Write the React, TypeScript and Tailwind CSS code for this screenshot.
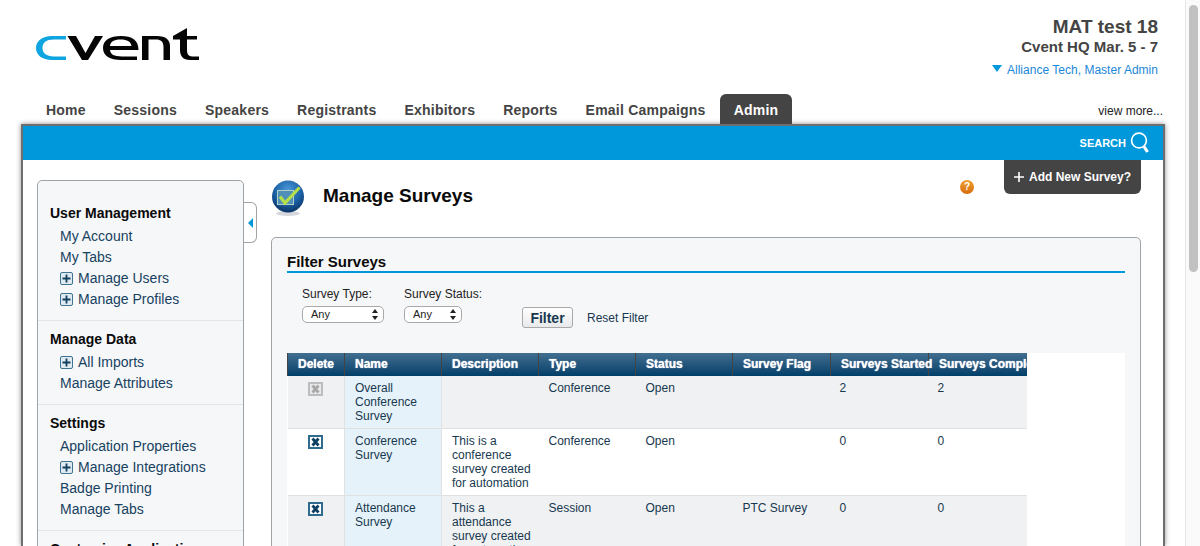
import { Fragment } from "react";

const tabs = ["Home", "Sessions", "Speakers", "Registrants", "Exhibitors", "Reports", "Email Campaigns"];

type NavItem = { label: string; plus?: boolean };

const sections: { title: string; items: NavItem[] }[] = [
  {
    title: "User Management",
    items: [
      { label: "My Account" },
      { label: "My Tabs" },
      { label: "Manage Users", plus: true },
      { label: "Manage Profiles", plus: true },
    ],
  },
  {
    title: "Manage Data",
    items: [{ label: "All Imports", plus: true }, { label: "Manage Attributes" }],
  },
  {
    title: "Settings",
    items: [
      { label: "Application Properties" },
      { label: "Manage Integrations", plus: true },
      { label: "Badge Printing" },
      { label: "Manage Tabs" },
    ],
  },
  { title: "Customize Application", items: [] },
];

const columns = [
  { label: "Delete", width: "w-[57px]", center: true },
  { label: "Name", width: "w-[97px]" },
  { label: "Description", width: "w-[97px]" },
  { label: "Type", width: "w-[97px]" },
  { label: "Status", width: "w-[97px]" },
  { label: "Survey Flag", width: "w-[98px]" },
  { label: "Surveys Started", width: "w-[98px]" },
  { label: "Surveys Completed", width: "w-[99px]" },
];

const rows = [
  {
    active: false,
    name: "Overall Conference Survey",
    description: "",
    type: "Conference",
    status: "Open",
    flag: "",
    started: "2",
    completed: "2",
    height: "h-[52px]",
  },
  {
    active: true,
    name: "Conference Survey",
    description: "This is a conference survey created for automation",
    type: "Conference",
    status: "Open",
    flag: "",
    started: "0",
    completed: "0",
    height: "h-[67px]",
  },
  {
    active: true,
    name: "Attendance Survey",
    description: "This a attendance survey created for automation",
    type: "Session",
    status: "Open",
    flag: "PTC Survey",
    started: "0",
    completed: "0",
    height: "h-[67px]",
  },
];

function Logo() {
  return (
    <svg width="165" height="34" viewBox="35 28 165 34" aria-label="cvent">
      <path
        d="M66 36H52C42 36 36 41 36 48S42 60 52 60H66V56.4H54C46 56.4 42.5 53 42.5 48S46 39.6 54 39.6H66Z"
        fill="#0ea5e0"
      />
      <path d="M67.5 36H76L85.5 53 95 36H103L88 60H82Z" fill="#050505" />
      <path
        fillRule="evenodd"
        d="M121 36C132 36 138.5 40 138.5 50H110C110.5 54.5 114 56.4 122 56.4H137V60H121C110 60 103 56 103 48S110 36 121 36ZM110 46H131.5C131 42 127.5 39.6 120.5 39.6S110.5 42 110 46Z"
        fill="#050505"
      />
      <path d="M142 60V36H157C166 36 170 40 170 46V60H163.5V47C163.5 42 161 39.6 156 39.6H148.5V60Z" fill="#050505" />
      <path
        d="M173 36L187 28V36H197V39.6H187V50C187 54.5 189 56.4 192 56.4H199V60H190C183 60 180 56 180 50V39.6H173Z"
        fill="#050505"
      />
    </svg>
  );
}

function PlusBox() {
  return (
    <svg width="13" height="13" viewBox="0 0 13 13" className="mr-[5px] shrink-0">
      <rect x="0.5" y="0.5" width="12" height="12" rx="1.5" fill="#dfeaf1" stroke="#3f7390" />
      <path d="M6.5 2.5V10.5M2.5 6.5H10.5" stroke="#12405e" strokeWidth="1.8" />
    </svg>
  );
}

function DeleteIcon({ active }: { active: boolean }) {
  const border = active ? "#2f6b8f" : "#bdbdbd";
  const mark = active ? "#0c3f62" : "#a8a8a8";
  return (
    <svg width="15" height="14" viewBox="0 0 15 14" className="mx-auto block">
      <rect x="1" y="1" width="13" height="12" fill={active ? "#ffffff" : "#e9e9e9"} stroke={border} strokeWidth="2" />
      <path d="M4.5 3.5L10.5 10.5M10.5 3.5L4.5 10.5" stroke={mark} strokeWidth="2.8" />
    </svg>
  );
}

function SurveyIcon() {
  return (
    <svg width="34" height="37" viewBox="0 0 34 37" className="shrink-0">
      <defs>
        <radialGradient id="ball" cx="0.5" cy="0.3" r="0.75">
          <stop offset="0" stopColor="#4c9ad8" />
          <stop offset="0.55" stopColor="#1c62a8" />
          <stop offset="1" stopColor="#082c58" />
        </radialGradient>
      </defs>
      <ellipse cx="17" cy="33.5" rx="12" ry="2.5" fill="#d5d8dc" />
      <circle cx="17" cy="16.5" r="16" fill="url(#ball)" />
      <rect x="6.5" y="10.5" width="16" height="14" fill="#4f8fb8" stroke="#b4d0c4" strokeWidth="1" />
      <path d="M9 16.5L14 23L28.5 7.5" fill="none" stroke="#b4e04a" strokeWidth="3.2" />
    </svg>
  );
}

function HelpIcon() {
  return (
    <div className="flex h-[14px] w-[14px] items-center justify-center rounded-full bg-gradient-to-b from-[#f0a030] to-[#d96c08] text-[10px] font-bold leading-none text-white">
      ?
    </div>
  );
}

function SearchIcon() {
  return (
    <svg width="20" height="22" viewBox="0 0 20 22" fill="none">
      <circle cx="9" cy="8.5" r="7.4" stroke="#ffffff" strokeWidth="1.7" />
      <path d="M14 14.5L17.5 20" stroke="#ffffff" strokeWidth="3.2" />
    </svg>
  );
}

function Select({ width, label }: { width: string; label: string }) {
  return (
    <div className={`relative ${width}`}>
      <select
        defaultValue={label}
        className="h-[17px] w-full appearance-none rounded-[5px] border border-[#a9a9a9] bg-white pl-2 text-[11px] leading-none text-[#222]"
      >
        <option>{label}</option>
      </select>
      <svg width="6" height="11" viewBox="0 0 6 11" className="pointer-events-none absolute right-[6px] top-[3px]">
        <path d="M3 0L6 4H0ZM3 11L0 7H6Z" fill="#222" />
      </svg>
    </div>
  );
}

function Sidebar() {
  return (
    <aside className="relative mt-5 h-[400px] w-[207px] shrink-0 rounded-t-[5px] border border-[#a0a3a6] bg-[#f6f7f9]">
      {sections.map((section, i) => (
        <Fragment key={section.title}>
          <div className={`px-3 border-[#e2e4e6] ${i === 0 ? "pt-[23px] pb-[10px]" : "border-t pt-[9px] pb-[10px]"}`}>
            <h3 className="mb-[4px] text-[14px] font-bold leading-[18px] text-[#0a0a0a]">{section.title}</h3>
            {section.items.map((item) => (
              <div key={item.label} className="flex h-[21px] items-center pl-[10px] text-[14px] text-[#17425f]">
                {item.plus && <PlusBox />}
                {item.label}
              </div>
            ))}
          </div>
        </Fragment>
      ))}
      {/* collapse handle */}
      <div className="absolute left-[206px] top-[21px] flex h-[41px] w-[13px] items-center justify-center rounded-r-[6px] border border-l-0 border-[#a0a3a6] bg-white">
        <svg width="5" height="10" viewBox="0 0 5 10">
          <path d="M5 0V10L0 5Z" fill="#0098da" />
        </svg>
      </div>
    </aside>
  );
}

function SurveysTable() {
  return (
    <div className="mt-[25px] bg-white">
      <div className="w-[740px] overflow-hidden">
        <table className="w-[740px] table-fixed border-collapse text-[12px] leading-[14px] text-[#17384f]">
          <thead>
            <tr className="h-[23px] bg-gradient-to-b from-[#416f90] to-[#003f69]">
              {columns.map((col) => (
                <th
                  key={col.label}
                  className={`${col.width} whitespace-nowrap border-x border-[#444] p-0 pb-[2px] text-[12px] font-bold text-white [text-shadow:0_0_1px_#fff] ${col.center ? "text-center" : "pl-[10px] text-left"}`}
                >
                  {col.label}
                </th>
              ))}
            </tr>
          </thead>
          <tbody>
            {rows.map((row, i) => (
              <tr key={row.name} className={`${row.height} border-b border-[#e0e1e3] ${i % 2 === 0 ? "bg-[#f0f1f3]" : "bg-white"}`}>
                <td className="border-r border-[#e0e1e3] pt-[6px] align-top">
                  <DeleteIcon active={row.active} />
                </td>
                <td className="border-r border-[#e0e1e3] bg-[#e6f2f9] pl-[10px] pr-2 pt-[5px] align-top">{row.name}</td>
                <td className="pl-[10px] pr-1 pt-[5px] align-top">{row.description}</td>
                <td className="pl-[10px] pt-[5px] align-top">{row.type}</td>
                <td className="pl-[10px] pt-[5px] align-top">{row.status}</td>
                <td className="pl-[10px] pt-[5px] align-top">{row.flag}</td>
                <td className="pl-[9px] pt-[5px] align-top">{row.started}</td>
                <td className="pl-[9px] pt-[5px] align-top">{row.completed}</td>
              </tr>
            ))}
          </tbody>
        </table>
      </div>
    </div>
  );
}

export default function App() {
  return (
    <div className="flex h-[546px] overflow-hidden bg-white font-['Liberation_Sans',Arial,sans-serif]">
      <div className="h-[546px] w-[1185px] shrink-0 overflow-hidden">
        <header className="flex h-[94px] items-start justify-between pr-[27px]">
          <div className="pl-[35px] pt-[28px]">
            <Logo />
          </div>
          <div className="pt-[16px] text-right text-[#444]">
            <div className="text-[19px] font-bold leading-[21px]">MAT test 18</div>
            <div className="text-[15px] font-bold leading-[20px]">Cvent HQ Mar. 5 - 7</div>
            <div className="mt-[5px] flex items-center justify-end text-[12px] leading-[16px] tracking-[0.02px] text-[#1b87d8]">
              <svg width="10" height="7" viewBox="0 0 10 7" className="mb-[3px] mr-[5px]">
                <path d="M0 0H10L5 7Z" fill="#0098da" />
              </svg>
              Alliance Tech, Master Admin
            </div>
          </div>
        </header>

        <nav className="flex h-[30px] items-end pl-[32px] pr-[22px]">
          {tabs.map((tab) => (
            <div key={tab} className="flex h-[30px] items-center px-[14px] pt-[2px] text-[14px] font-bold tracking-[0.22px] text-[#444]">
              {tab}
            </div>
          ))}
          <div className="flex h-[30px] items-center rounded-t-[6px] bg-[#444] px-[14px] pt-[2px] text-[14px] font-bold tracking-[0.22px] text-white">
            Admin
          </div>
          <div className="ml-auto pb-[6px] text-[12px] leading-[14px] text-[#222]">view more...</div>
        </nav>

        <main className="ml-[21px] h-[422px] w-[1144px] border-x-2 border-t-2 border-[#6e6e6e] bg-white shadow-[0_0_5px_rgba(0,0,0,0.45)]">
          <div className="flex h-[34px] items-center justify-end bg-[#0098da] pr-[13px] text-[11px] font-bold text-white">
            <span className="mr-[4px] mt-[1px]">SEARCH</span>
            <SearchIcon />
          </div>

          <div className="flex pl-[14px]">
            <Sidebar />

            <section className="ml-[27px] w-[870px]">
              <div className="flex h-[77px] items-start">
                <div className="mt-[20px]">
                  <SurveyIcon />
                </div>
                <h1 className="ml-[18px] mt-[25px] text-[19px] font-bold leading-[22px] text-[#0a0a0a]">Manage Surveys</h1>
                <div className="ml-auto mr-[30px] mt-[20px]">
                  <HelpIcon />
                </div>
                <button className="flex h-[34px] w-[137px] items-center justify-center rounded-b-[6px] bg-[#444] text-[12px] font-bold text-white">
                  <svg width="10" height="10" viewBox="0 0 10 10" className="mr-[5px]">
                    <path d="M5 0V10M0 5H10" stroke="#ffffff" strokeWidth="1.6" />
                  </svg>
                  Add New Survey?
                </button>
              </div>

              <div className="h-[400px] rounded-t-[5px] border border-[#a0a3a6] bg-[#f6f7f9] px-[15px] pt-[15px]">
                <h2 className="border-b-2 border-[#0098da] text-[15px] font-bold leading-[18px] text-[#0a0a0a]">Filter Surveys</h2>

                <div className="mt-[13px] flex items-start pl-[15px] text-[12px] leading-[16px] text-[#222]">
                  <div className="w-[102px]">
                    <div className="mb-[4px]">Survey Type:</div>
                    <Select width="w-[82px]" label="Any" />
                  </div>
                  <div className="w-[118px]">
                    <div className="mb-[4px]">Survey Status:</div>
                    <Select width="w-[58px]" label="Any" />
                  </div>
                  <button className="mt-[21px] flex h-[21px] w-[51px] items-center justify-center rounded-[3px] border border-[#a9a9a9] bg-gradient-to-b from-white to-[#e8e9eb] text-[14px] font-bold text-[#17384f]">
                    Filter
                  </button>
                  <span className="ml-[14px] mt-[24px] text-[#17384f]">Reset Filter</span>
                </div>

                <SurveysTable />
              </div>
            </section>
          </div>
        </main>
      </div>

      <div className="h-[546px] w-[15px] border-l border-[#e6e6e6] bg-[#fafafa] pl-[3px] pt-[5px]">
        <div className="h-[267px] w-[9px] rounded-full bg-[#c1c1c1]" />
      </div>
    </div>
  );
}
